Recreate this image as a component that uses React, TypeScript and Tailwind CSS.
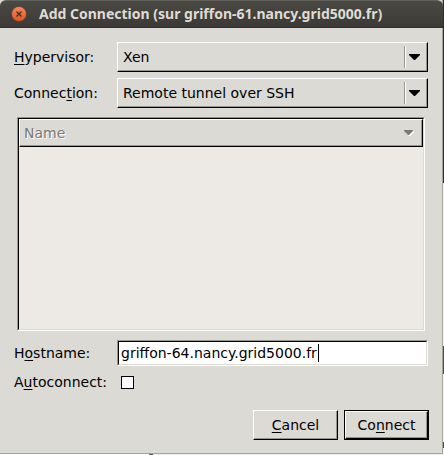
import type { ReactNode } from "react";

const RAISED =
  "border border-t-white border-l-white border-r-black border-b-black shadow-[inset_-1px_-1px_0_#96968f]";

function Key({ children }: { children: string }) {
  return <span className="underline decoration-1 underline-offset-2">{children}</span>;
}

function Row({ id, label, children }: { id: string; label: ReactNode; children: ReactNode }) {
  return (
    <div className="flex items-center">
      <label htmlFor={id} className="w-[103px] shrink-0">
        {label}
      </label>
      {children}
    </div>
  );
}

function Combo({ id, value }: { id: string; value: string }) {
  return (
    <div className="relative flex-1">
      <select
        id={id}
        defaultValue={value}
        className={`block h-[30px] w-full appearance-none rounded-none bg-[#dbdad5] pr-8 pl-[5px] outline-none ${RAISED}`}
      >
        <option>{value}</option>
      </select>
      <span className="pointer-events-none absolute inset-y-1 right-2 flex items-center">
        <span className="mr-[3px] h-[22px] w-[2px] border-r border-l border-r-white border-l-[#96968f]" />
        <svg viewBox="0 0 11 6" className="h-[6px] w-[11px]" fill="#000000" aria-hidden="true">
          <path d="M0 0h11v1L6 6H5L0 1z" />
        </svg>
      </span>
    </div>
  );
}

export default function App() {
  return (
    <div className="bg-white font-['DejaVu_Sans',sans-serif] text-[14px] leading-5 text-black">
      <div className="flex bg-[#4b4b4b]">
        <main className="flex-1 border-r border-b border-[#a5a49f] bg-[#dbdad5]">
          <header className="-mr-px flex h-7 items-center rounded-t-md border-t border-b border-t-[#62615b] border-b-[#31302c] bg-linear-to-b from-[#4a4943] to-[#3b3a36] pl-[11px]">
            <button type="button" aria-label="Close" className="mr-3 size-4 shrink-0">
              <svg viewBox="0 0 16 16" className="size-4">
                <defs>
                  <linearGradient id="close" x1="0" y1="0" x2="0" y2="1">
                    <stop offset="0" stopColor="#f58a62" />
                    <stop offset="1" stopColor="#dc5420" />
                  </linearGradient>
                </defs>
                <circle cx="8" cy="8" r="7.5" fill="url(#close)" stroke="#54372a" strokeWidth="0.6" />
                <path d="M5.5 5.5l5 5M10.5 5.5l-5 5" stroke="#40291f" strokeWidth="1.2" />
              </svg>
            </button>
            <h1 className="font-['Noto_Sans','Open_Sans',sans-serif] text-[14px] font-bold whitespace-nowrap text-[#dfdbd2]">
              Add Connection (sur griffon-61.nancy.grid5000.fr)
            </h1>
          </header>

          <form className="px-[14px] pt-[14px] pb-[13px]" onSubmit={(e) => e.preventDefault()}>
            <div className="flex flex-col gap-[6px]">
              <Row id="hypervisor" label={<><Key>H</Key>ypervisor:</>}>
                <Combo id="hypervisor" value="Xen" />
              </Row>
              <Row id="connection" label={<>Connec<Key>t</Key>ion:</>}>
                <Combo id="connection" value="Remote tunnel over SSH" />
              </Row>
            </div>

            <div className="mx-[3px] mt-[9px] h-[214px] border border-t-[#96968f] border-r-white border-b-white border-l-[#96968f]">
              <div className="h-full border border-t-black border-r-[#dbdad5] border-b-[#dbdad5] border-l-black bg-[#edeae5]">
                <table className="w-full border-collapse">
                  <thead>
                    <tr>
                      <th className="p-0 text-left font-normal">
                        <div className={`flex h-7 items-center justify-between bg-[#dbdad5] pr-2 pl-1 text-[#7b7b76] ${RAISED}`}>
                          <span className="[text-shadow:1px_1px_0_white]">Name</span>
                          <svg viewBox="0 0 10 6" className="h-[6px] w-[10px]" aria-hidden="true">
                            <path d="M1 1h9v1L6 6H5L1 2z" fill="#ffffff" />
                            <path d="M0 0h9v1L5 5H4L0 1z" fill="#7b7b76" />
                          </svg>
                        </div>
                      </th>
                    </tr>
                  </thead>
                </table>
              </div>
            </div>

            <div className="mt-[9px]">
              <Row id="hostname" label={<>H<Key>o</Key>stname:</>}>
                <div className="relative flex-1 border border-t-[#96968f] border-r-white border-b-white border-l-[#96968f]">
                  <input
                    id="hostname"
                    type="text"
                    defaultValue="griffon-64.nancy.grid5000.fr"
                    className="block h-6 w-full border border-t-black border-r-[#dbdad5] border-b-[#dbdad5] border-l-black bg-white px-[2px] outline-none"
                  />
                  <span className="pointer-events-none absolute top-[3px] left-[200px] h-[18px] w-px bg-black" />
                </div>
              </Row>
            </div>
            <div className="mt-[6px]">
              <Row id="autoconnect" label={<>A<Key>u</Key>toconnect:</>}>
                <input
                  id="autoconnect"
                  type="checkbox"
                  className="ml-1 size-[13px] appearance-none border border-black bg-white"
                />
              </Row>
            </div>

            <div className="mt-[18px] -mr-px flex justify-end gap-[6px]">
              <button type="button" className={`h-[30px] w-[85px] ${RAISED}`}>
                <Key>C</Key>ancel
              </button>
              <button type="submit" className="h-[30px] w-[85px] border border-black">
                <span className={`flex h-full items-center justify-center ${RAISED}`}>
                  Co<Key>n</Key>nect
                </span>
              </button>
            </div>
          </form>
        </main>
        <div className="w-px shrink-0 bg-[linear-gradient(#2e2a2e_183px,#f2f2f2_183px,#f2f2f2_346px,#4b4b4b_346px,#4b4b4b_374px,#f2f2f2_374px,#f2f2f2_442px,#4b4b4b_442px,#4b4b4b_448px,#f2f2f2_448px)]" />
      </div>
      <div className="h-px bg-[linear-gradient(to_right,#ffffff_149px,#555555_149px,#555555_153px,#efefef_153px)]" />
    </div>
  );
}
